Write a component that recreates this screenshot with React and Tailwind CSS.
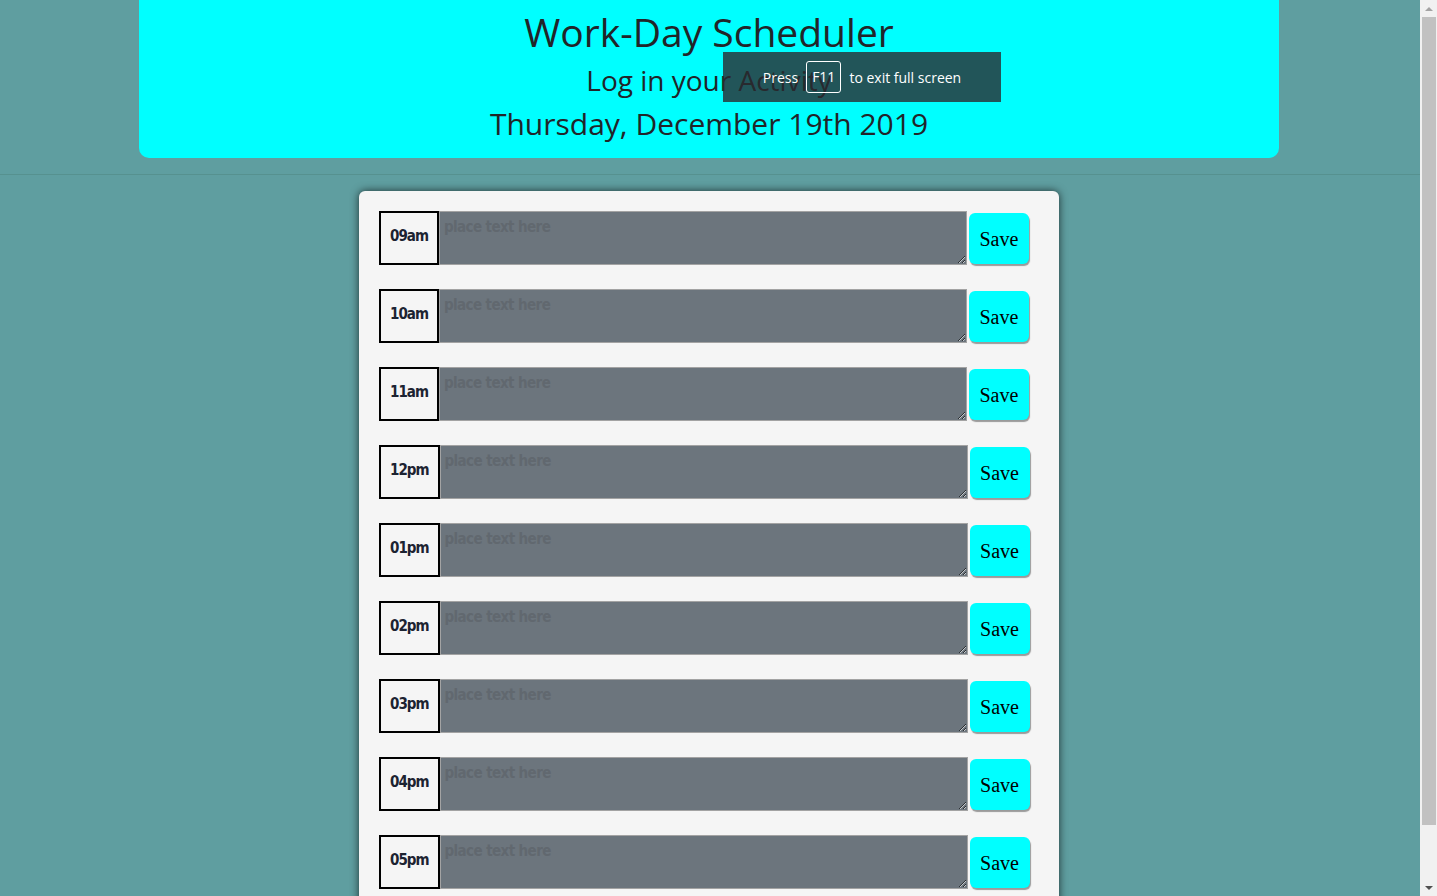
import React from 'react';

const hours = ['09am', '10am', '11am', '12pm', '01pm', '02pm', '03pm', '04pm', '05pm'];

const condensed = { fontFamily: '"DejaVu Sans Condensed", "Liberation Sans Narrow", "Liberation Sans", sans-serif' };

const Row = ({ hour }) => (
  <div className="flex items-start mb-6">
    <div
      className="h-[54px] border-2 border-black px-[9px] pt-[13px] text-[15px] font-bold leading-[20px] tracking-[-1px] text-[#1c2331]"
      style={condensed}
    >
      {hour}
    </div>
    <textarea
      placeholder="place text here"
      className="h-[54px] w-[528px] border border-[#a3a3a3] bg-[#6c757d] px-[4px] pt-[5px] text-[15px] font-bold leading-[20px] tracking-[-0.6px] text-[#333] placeholder:text-[#61686f] outline-none"
      style={condensed}
    />
    <button
      className="mt-[2px] ml-[2px] h-[51px] w-[60px] rounded-[6px] bg-[#00ffff] text-[20px] text-black shadow-[1px_2px_1px_#9a9a9a]"
      style={{ fontFamily: '"Liberation Serif", serif' }}
    >
      Save
    </button>
  </div>
);

const Scrollbar = () => (
  <div className="flex w-[17px] flex-col items-center bg-[#f1f1f1]">
    <div className="flex h-[17px] w-full items-center justify-center">
      <div className="h-0 w-0 border-x-[4px] border-b-[4px] border-x-transparent border-b-[#a3a3a3]" />
    </div>
    <div className="h-[808px] w-[14px] bg-[#c1c1c1]" />
    <div className="flex-1" />
    <div className="flex h-[17px] w-full items-center justify-center">
      <div className="h-0 w-0 border-x-[4px] border-t-[4px] border-x-transparent border-t-[#505050]" />
    </div>
  </div>
);

export default function App() {
  const sans = { fontFamily: '"Open Sans", "Noto Sans", sans-serif' };
  return (
    <div className="flex h-screen overflow-hidden">
      <div className="relative flex-1 overflow-hidden bg-[#5f9ea0] pr-[2px]">
        <header className="-mr-[2px] border-b border-[#56918f] pb-4 pr-[2px]">
          <div className="mx-auto w-[1140px] rounded-b-[10px] bg-[#00ffff] pt-[8px] pb-[12px] text-center text-[#212529]" style={sans}>
            <h1 className="text-[39px] leading-[48px]">Work-Day Scheduler</h1>
            <p className="mt-[4px] text-[28px] leading-[40px]">Log in your Activity</p>
            <p className="mt-[2px] text-[30px] leading-[44px]">Thursday, December 19th 2019</p>
          </div>
        </header>
        <main className="mx-auto mt-4 w-[700px] rounded-[6px] bg-[#f5f5f5] px-5 pt-5 pb-5 shadow-[0_0_8px_rgba(0,0,0,0.7)]">
          {hours.map((h) => (
            <Row key={h} hour={h} />
          ))}
        </main>
        <div
          className="absolute left-[723px] top-[52px] flex h-[50px] w-[278px] items-center justify-center gap-[8px] bg-[rgba(42,42,48,0.8)] text-[14px] text-white"
          style={sans}
        >
          <span>Press</span>
          <span className="rounded-[3px] border border-white px-[5px] leading-[30px]">F11</span>
          <span>to exit full screen</span>
        </div>
      </div>
      <Scrollbar />
    </div>
  );
}
